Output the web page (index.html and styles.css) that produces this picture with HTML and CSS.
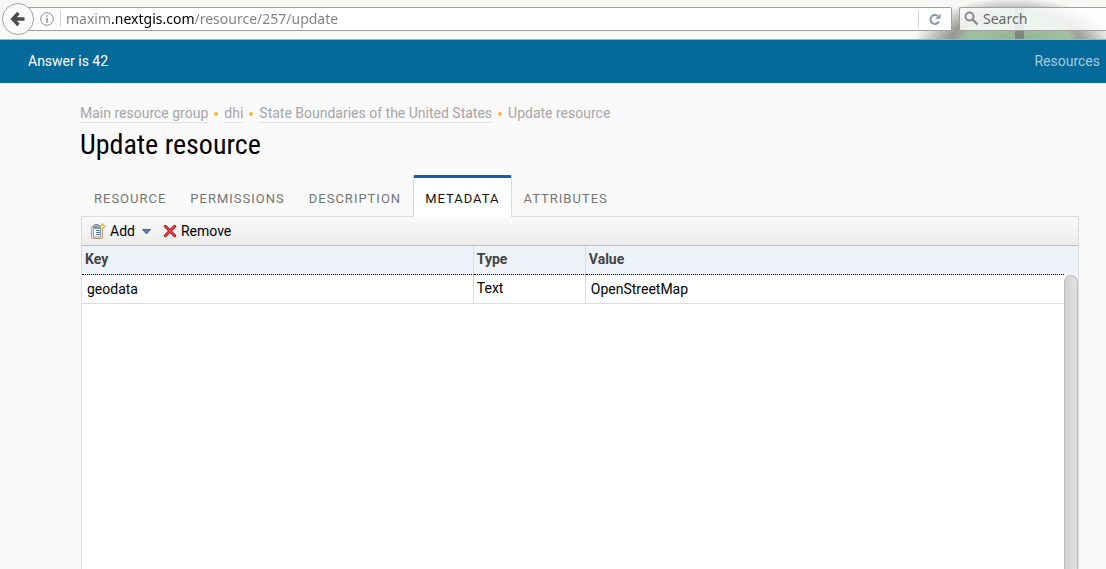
FILE: index.html
```html
<!DOCTYPE html>
<html lang="en">
<head>
<meta charset="utf-8">
<meta name="viewport" content="width=device-width, initial-scale=1">
<title>Update resource</title>
<link rel="stylesheet" href="styles.css">
</head>
<body>
<div class="browser">
  <button class="back" type="button" aria-label="Back">
    <svg width="16" height="16" viewBox="0 0 16 16"><path d="M8.500 2 2.800 8l5.700 6M3.500 8H14.500" fill="none" stroke="#4c4c4c" stroke-width="3.400"/></svg>
  </button>
  <div class="urlbar">
    <svg class="info" width="14" height="14" viewBox="0 0 14 14"><circle cx="7" cy="7" r="6.300" fill="none" stroke="#8a8a8a"/><path d="M7 3.200v1.500M7 6v4.800" stroke="#8a8a8a" stroke-width="1.500"/></svg>
    <span class="divider"></span>
    <input class="url" type="text" aria-label="Address" value="maxim.nextgis.com/resource/257/update">
    <span class="divider"></span>
    <button class="reload" type="button" aria-label="Reload">
      <svg width="12" height="12" viewBox="0 0 12 12"><path d="M10 8.500A4.500 4.500 0 1 1 8.600 2.700" fill="none" stroke="#8796a8" stroke-width="2"/><path d="M11.500.5v5.300H6.200z" fill="#8796a8"/></svg>
    </button>
  </div>
  <div class="searchbar">
    <svg width="15" height="15" viewBox="0 0 15 15"><circle cx="5.500" cy="5.500" r="4" fill="none" stroke="#8b8b8b" stroke-width="2"/><path d="m8.500 8.500 5 5" stroke="#8b8b8b" stroke-width="2.400"/></svg>
    <input class="search" type="text" aria-label="Search" placeholder="Search">
  </div>
</div>

<header class="header">
  <a class="brand" href="#">Answer is 42</a>
  <a class="resources" href="#">Resources</a>
</header>

<main class="content">
  <nav class="crumbs" aria-label="Breadcrumb">
    <a href="#">Main resource group</a><i class="dot"></i><a href="#">dhi</a><i class="dot"></i><a href="#">State Boundaries of the United States</a><i class="dot"></i><span class="current">Update resource</span>
  </nav>
  <h1 class="title">Update resource</h1>

  <div class="tabs" role="tablist">
    <button class="tab" type="button" role="tab">RESOURCE</button>
    <button class="tab" type="button" role="tab">PERMISSIONS</button>
    <button class="tab" type="button" role="tab">DESCRIPTION</button>
    <button class="tab tab-active" type="button" role="tab" aria-selected="true">METADATA</button>
    <button class="tab" type="button" role="tab">ATTRIBUTES</button>
  </div>

  <section class="panel">
    <div class="toolbar">
      <button class="tool" type="button">
        <svg width="16" height="16" viewBox="0 0 16 16">
          <rect x="1.500" y="3.500" width="11" height="12" rx="1" fill="#dfe5ee" stroke="#b99a6c"/>
          <path d="M3.500 5.500h7v8.500h-7z" fill="#fff" stroke="#8ea0bf"/>
          <path d="M3.500 4.500v-2H5v-1h3v1h1.500v2z" fill="#9fb0c8" stroke="#71849f"/>
          <path d="M6 7.500h4M6 9.500h4M6 11.500h4" stroke="#5573a8"/>
          <path d="m12.500.5.9 2.100 2.100.9-2.100.9-.9 2.100-.9-2.100-2.100-.9 2.100-.9z" fill="#fffbd0" stroke="#c19d20"/>
        </svg>
        <span>Add</span>
        <svg class="caret" width="9" height="6" viewBox="0 0 9 6"><path d="M.5.5h8l-4 4.500z" fill="#5b87b5" stroke="#3f648c"/></svg>
      </button>
      <button class="tool" type="button">
        <svg width="14" height="14" viewBox="0 0 14 14"><path d="m2.300 2.300 9.400 9.400M11.700 2.300l-9.400 9.400" stroke="#a90f14" stroke-width="3" stroke-linecap="round"/><path d="m2.300 2.300 9.400 9.400M11.700 2.300l-9.400 9.400" stroke="#ec4347" stroke-width="1.300" stroke-linecap="round"/></svg>
        <span>Remove</span>
      </button>
    </div>
    <div class="grid">
      <table class="table">
        <colgroup><col class="col-key"><col class="col-type"><col></colgroup>
        <thead><tr><th scope="col">Key</th><th scope="col">Type</th><th scope="col">Value</th></tr></thead>
        <tbody><tr><td class="editable">geodata</td><td>Text</td><td class="editable">OpenStreetMap</td></tr></tbody>
      </table>
      <div class="scroll">
        <div class="corner"></div>
        <div class="thumb"></div>
      </div>
    </div>
  </section>
</main>
</body>
</html>
```
FILE: styles.css
```css
* { box-sizing: border-box; }

body {
  margin: 0;
  height: 100vh;
  display: flex;
  flex-direction: column;
  overflow: hidden;
  background: #fafafa;
  color: #000;
  font: 14px/20px Roboto, "Liberation Sans", sans-serif;
}

button, input {
  margin: 0;
  padding: 0;
  border: 0;
  background: none;
  font: inherit;
  color: inherit;
}

a { text-decoration: none; }
svg { display: block; flex: none; }

.browser {
  flex: none;
  display: flex;
  align-items: center;
  height: 40px;
  padding: 0 0 2px 2px;
  border-bottom: 1px solid #b0b0ae;
  background:
    linear-gradient(#7f8580, #7f8580) right 82px top 8px / 9px 31px no-repeat,
    radial-gradient(ellipse 66px 40px at calc(100% - 88px) 46px, #8fb38f 0, #a3bfa3 80%, #b4c8b400 100%),
    radial-gradient(ellipse 100px 46px at calc(100% - 92px) 44px, #8f918e 0, #999a98 66%, #f7f7f600 100%),
    #f7f7f6;
  font: 14px/20px "Noto Sans", sans-serif;
}

.back {
  z-index: 1;
  flex: none;
  display: grid;
  place-items: center;
  width: 32px;
  height: 32px;
  margin-right: -6px;
  border: 1px solid #a5a5a3;
  border-radius: 50%;
  background: #fbfbfa;
}

.urlbar, .searchbar {
  display: flex;
  align-items: center;
  height: 24px;
  border: 1px solid #a0a09e;
  background: #fff;
}

.urlbar {
  flex: 1;
  min-width: 0;
  margin-right: 7px;
  padding-left: 12px;
  border-left: 0;
  border-radius: 0 2px 2px 0;
}

.divider { width: 1px; height: 16px; background: #d2d2d2; }
.info { margin-right: 6px; }

.url {
  flex: 1;
  min-width: 0;
  height: 22px;
  padding-left: 5px;
  background: linear-gradient(90deg, #808080 49px, #000 49px 133px, #808080 133px);
  background-clip: text;
  -webkit-background-clip: text;
  color: transparent;
}

.reload {
  display: grid;
  place-items: center;
  width: 32px;
  height: 22px;
}

.searchbar {
  flex: none;
  width: 147px;
  padding-left: 4px;
  gap: 4px;
  border-right: 0;
  border-radius: 2px 0 0 2px;
  background: #ffffffd0;
}

.search { width: 100%; }
.search::placeholder { color: #666; opacity: 1; }

.header {
  flex: none;
  display: flex;
  justify-content: space-between;
  align-items: center;
  height: 43px;
  padding: 0 6px 2px 28px;
  background: #036a9a;
}

.brand { color: #fff; }
.resources { color: #a7cbdc; }

.content {
  flex: 1;
  display: flex;
  flex-direction: column;
  padding: 22px 27px 0 80px;
}

.crumbs {
  display: flex;
  align-items: center;
  height: 18px;
  line-height: 17px;
  color: #a6a6a6;
}

.crumbs a { color: inherit; border-bottom: 1px solid #e2e2e2; }
.current { border-bottom: 1px solid transparent; }

.dot {
  width: 4px;
  height: 4px;
  margin: 0 6px;
  border-radius: 50%;
  background: #fcb53b;
}

.title {
  margin: 6px 0 0;
  font: 400 28px/32px "Roboto Condensed", Roboto, sans-serif;
}

.tabs {
  display: flex;
  position: relative;
  margin: 14px 0 -1px 2px;
}

.tab {
  height: 42px;
  padding: 5px 11px 0;
  border: 1px solid transparent;
  border-width: 0 1px;
  color: #757575;
  font-size: 13px;
  letter-spacing: 1px;
}

.tab-active {
  padding-top: 2px;
  border-color: #dcdcdc;
  border-top: 3px solid #1160b0;
  border-radius: 2px 2px 0 0;
  background: #fff;
  color: #111;
}

.panel {
  flex: 1;
  display: flex;
  flex-direction: column;
  margin-left: 1px;
  border: 1px solid #dcdcdc;
  border-bottom: 0;
  background: #fff;
}

.toolbar {
  display: flex;
  align-items: center;
  gap: 12px;
  height: 29px;
  padding-left: 8px;
  border-bottom: 1px solid #b5bccd;
  background: linear-gradient(#fafafa, #ececec);
}

.tool { display: flex; align-items: center; gap: 4px; }
.caret { margin: 1px 0 0 3px; }

.grid { flex: 1; display: flex; }

.table {
  flex: 1;
  align-self: flex-start;
  table-layout: fixed;
  width: 100%;
  border-spacing: 0;
}

.col-key { width: 39.9%; }
.col-type { width: 112px; }

.table th, .table td {
  height: 29px;
  padding: 0 3px;
  border-right: 1px solid #dcdcdc;
  border-bottom: 1px solid #dcdcdc;
  text-align: left;
  vertical-align: middle;
}

.table th {
  padding-bottom: 2px;
  border-bottom: 1px dotted #000;
  background: #edf3f8;
  color: #444;
  font-weight: 700;
}

.table th:last-child, .table td:last-child { border-right: 0; }
.table td { padding-bottom: 2px; }
.table .editable { padding: 0 5px; }

.scroll { flex: none; display: flex; flex-direction: column; width: 14px; }
.corner { height: 29px; background: #edf3f8; }

.thumb {
  flex: 1;
  border: 1px solid #bdbdbd;
  border-bottom: 0;
  border-radius: 7px 7px 0 0;
  background: linear-gradient(90deg, #d2d2d2, #e2e2e2);
}
```
